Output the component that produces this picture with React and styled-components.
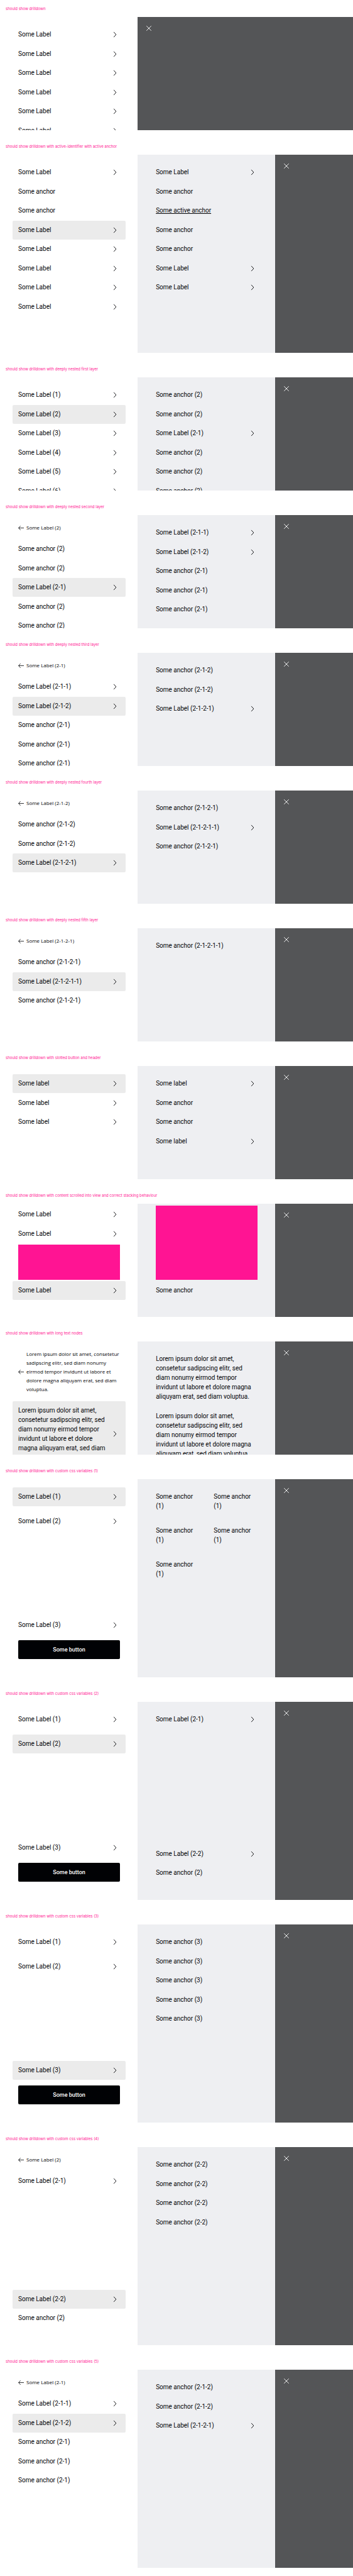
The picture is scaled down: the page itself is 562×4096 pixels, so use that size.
import React from "react";
import styled, { createGlobalStyle, css } from "styled-components";

const GlobalStyle = createGlobalStyle`
  *, *::before, *::after { box-sizing: border-box; }
  body {
    margin: 0;
    background: #fff;
    color: #010205;
    font: 10px/15px Roboto, "Liberation Sans", sans-serif;
  }
`;

const Page = styled.main`
  padding-bottom: 13px;
`;

const Example = styled.section`
  & + & {
    padding-top: 12px;
  }
`;

const Title = styled.h2`
  margin: 0;
  padding: 9px;
  color: #ff1493;
  font: 400 6px/9px Inter, "Open Sans", sans-serif;
`;

const Drilldown = styled.div`
  display: grid;
  grid-template-columns: ${(p) => (p.$open ? "39% 39% 1fr" : "39% 1fr")};
  height: ${(p) => (p.$tall ? 315 : 180)}px;
  overflow: hidden;
`;

const Panel = styled.nav`
  display: flex;
  flex-direction: column;
  min-height: 0;
  overflow: hidden;
  padding: ${(p) => (p.$scrolled ? p.$scrolled : 13)}px 19px ${(p) => (p.$spaced ? 29 : 27)}px 20px;
  background: ${(p) => (p.$secondary ? "#eeeff2" : "#fff")};
`;

const Backdrop = styled.div`
  padding: 11px;
  background: #545557;
`;

const IconButton = styled.button`
  display: block;
  width: 14px;
  height: 14px;
  padding: 0;
  border: 0;
  background: none;
  color: #fff;
`;

const Items = styled.ul`
  flex: 1 0 auto;
  margin: 0;
  padding: 0;
  list-style: none;
  ${(p) =>
    p.$columns
      ? css`
          display: grid;
          grid-template-columns: 1fr 1fr;
          align-content: start;
          gap: 9px 4px;
        `
      : css`
          display: flex;
          flex-direction: column;
        `}
  ${(p) =>
    p.$spaced
      ? css`
          gap: 9px;
        `
      : !p.$columns &&
        css`
          & > li:nth-child(odd) {
            padding-bottom: 1px;
          }
        `}
`;

const Item = styled.li`
  margin-top: ${(p) => (p.$pushed ? "auto" : 0)};
`;

const row = css`
  display: flex;
  align-items: center;
  gap: 4px;
  width: 100%;
  padding: 7px 9px 8px;
  border: 0;
  border-radius: 2px;
  background: none;
  color: inherit;
  font: inherit;
  text-align: left;
  text-decoration: none;
`;

const LabelButton = styled.button`
  ${row}
  background: ${(p) => (p.$active ? "#ebebeb" : "none")};
`;

const RowText = styled.span`
  flex: 1;
`;

const Anchor = styled.a`
  ${row}
  ${(p) =>
    p.$active &&
    css`
      text-decoration: underline;
      text-decoration-thickness: 1px;
      text-underline-offset: 1px;
    `}
`;

const BackButton = styled.button`
  display: flex;
  flex: none;
  align-items: center;
  gap: 4px;
  margin: 0 0 12px;
  padding: 0 9px;
  border: 0;
  background: none;
  color: inherit;
  font: 8px/14px "Open Sans", "Noto Sans", sans-serif;
  text-align: left;
`;

const PrimaryButton = styled.button`
  display: block;
  width: calc(100% - 18px);
  height: 30px;
  margin: 0 9px;
  padding: 0;
  border: 0;
  border-radius: 2px;
  background: #010205;
  color: #fff;
  font: 500 9px/15px Roboto, "Liberation Sans", sans-serif;
`;

const Block = styled.div`
  height: ${(p) => p.$height}px;
  margin: 2px 9px 1px;
  background: #ff1493;
`;

const Icon = styled.svg`
  display: block;
  flex: none;
  width: ${(p) => p.$size}px;
  height: ${(p) => p.$size}px;
  fill: none;
  stroke: currentColor;
`;

const Chevron = () => (
  <Icon $size={14} viewBox="0 0 24 24" strokeWidth="1.5" aria-hidden="true">
    <path d="M7 5l6.5 7L7 19" />
  </Icon>
);

const ArrowLeft = () => (
  <Icon $size={9} viewBox="0 0 16 16" strokeWidth="1.4" aria-hidden="true">
    <path d="M16 8H1M6.5 2L1 8l5.5 6" />
  </Icon>
);

const Close = () => (
  <Icon $size={14} viewBox="0 0 24 24" strokeWidth="1.5" aria-hidden="true">
    <path d="M5.5 5.5l13 13M18.5 5.5l-13 13" />
  </Icon>
);

const label = (text, props) => ({ kind: "label", text, ...props });
const anchor = (text, props) => ({ kind: "anchor", text, ...props });
const button = (text) => ({ kind: "button", text });
const block = (height) => ({ kind: "block", height });
const times = (count, item) => Array.from({ length: count }, () => item);
const active = { active: true };
const pushed = { pushed: true };

const lorem =
  "Lorem ipsum dolor sit amet, consetetur sadipscing elitr, sed diam nonumy eirmod tempor invidunt ut labore et dolore magna aliquyam erat, sed diam voluptua.";

const examples = [
  {
    title: "should show drilldown",
    first: { items: times(6, label("Some Label")) },
  },
  {
    title: "should show drilldown with active-identifier with active anchor",
    tall: true,
    first: {
      items: [
        label("Some Label"),
        ...times(2, anchor("Some anchor")),
        label("Some Label", active),
        ...times(4, label("Some Label")),
      ],
    },
    second: {
      items: [
        label("Some Label"),
        anchor("Some anchor"),
        anchor("Some active anchor", active),
        ...times(2, anchor("Some anchor")),
        ...times(2, label("Some Label")),
      ],
    },
  },
  {
    title: "should show drilldown with deeply nested first layer",
    first: {
      items: [
        label("Some Label (1)"),
        label("Some Label (2)", active),
        label("Some Label (3)"),
        label("Some Label (4)"),
        label("Some Label (5)"),
        label("Some Label (6)"),
      ],
    },
    second: {
      items: [
        ...times(2, anchor("Some anchor (2)")),
        label("Some Label (2-1)"),
        ...times(3, anchor("Some anchor (2)")),
      ],
    },
  },
  {
    title: "should show drilldown with deeply nested second layer",
    first: {
      back: "Some Label (2)",
      items: [
        ...times(2, anchor("Some anchor (2)")),
        label("Some Label (2-1)", active),
        ...times(2, anchor("Some anchor (2)")),
      ],
    },
    second: {
      items: [
        label("Some Label (2-1-1)"),
        label("Some Label (2-1-2)"),
        ...times(3, anchor("Some anchor (2-1)")),
      ],
    },
  },
  {
    title: "should show drilldown with deeply nested third layer",
    first: {
      back: "Some Label (2-1)",
      items: [
        label("Some Label (2-1-1)"),
        label("Some Label (2-1-2)", active),
        ...times(3, anchor("Some anchor (2-1)")),
      ],
    },
    second: {
      items: [...times(2, anchor("Some anchor (2-1-2)")), label("Some Label (2-1-2-1)")],
    },
  },
  {
    title: "should show drilldown with deeply nested fourth layer",
    first: {
      back: "Some Label (2-1-2)",
      items: [
        ...times(2, anchor("Some anchor (2-1-2)")),
        label("Some Label (2-1-2-1)", active),
      ],
    },
    second: {
      items: [
        anchor("Some anchor (2-1-2-1)"),
        label("Some Label (2-1-2-1-1)"),
        anchor("Some anchor (2-1-2-1)"),
      ],
    },
  },
  {
    title: "should show drilldown with deeply nested fifth layer",
    first: {
      back: "Some Label (2-1-2-1)",
      items: [
        anchor("Some anchor (2-1-2-1)"),
        label("Some Label (2-1-2-1-1)", active),
        anchor("Some anchor (2-1-2-1)"),
      ],
    },
    second: { items: [anchor("Some anchor (2-1-2-1-1)")] },
  },
  {
    title: "should show drilldown with slotted button and header",
    first: { items: [label("Some label", active), ...times(2, label("Some label"))] },
    second: {
      items: [label("Some label"), ...times(2, anchor("Some anchor")), label("Some label")],
    },
  },
  {
    title: "should show drilldown with content scrolled into view and correct stacking behaviour",
    first: {
      scrolled: 2,
      items: [...times(2, label("Some Label")), block(56), label("Some Label", active)],
    },
    second: { scrolled: 1, items: [block(118), anchor("Some anchor")] },
  },
  {
    title: "should show drilldown with long text nodes",
    first: { back: lorem, items: [label(lorem, active)] },
    second: { items: times(2, anchor(lorem)) },
  },
  {
    title: "should show drilldown with custom css variables (1)",
    tall: true,
    first: {
      spaced: true,
      items: [
        label("Some Label (1)", active),
        label("Some Label (2)"),
        label("Some Label (3)", pushed),
        button("Some button"),
      ],
    },
    second: { columns: true, items: times(5, anchor("Some anchor (1)")) },
  },
  {
    title: "should show drilldown with custom css variables (2)",
    tall: true,
    first: {
      spaced: true,
      items: [
        label("Some Label (1)"),
        label("Some Label (2)", active),
        label("Some Label (3)", pushed),
        button("Some button"),
      ],
    },
    second: {
      items: [
        label("Some Label (2-1)"),
        label("Some Label (2-2)", pushed),
        anchor("Some anchor (2)"),
      ],
    },
  },
  {
    title: "should show drilldown with custom css variables (3)",
    tall: true,
    first: {
      spaced: true,
      items: [
        label("Some Label (1)"),
        label("Some Label (2)"),
        label("Some Label (3)", { ...active, ...pushed }),
        button("Some button"),
      ],
    },
    second: { items: times(5, anchor("Some anchor (3)")) },
  },
  {
    title: "should show drilldown with custom css variables (4)",
    tall: true,
    first: {
      back: "Some Label (2)",
      items: [
        label("Some Label (2-1)"),
        label("Some Label (2-2)", { ...active, ...pushed }),
        anchor("Some anchor (2)"),
      ],
    },
    second: { items: times(4, anchor("Some anchor (2-2)")) },
  },
  {
    title: "should show drilldown with custom css variables (5)",
    tall: true,
    first: {
      back: "Some Label (2-1)",
      items: [
        label("Some Label (2-1-1)"),
        label("Some Label (2-1-2)", active),
        ...times(3, anchor("Some anchor (2-1)")),
      ],
    },
    second: {
      items: [...times(2, anchor("Some anchor (2-1-2)")), label("Some Label (2-1-2-1)")],
    },
  },
];

function Entry({ item }) {
  switch (item.kind) {
    case "label":
      return (
        <LabelButton type="button" $active={item.active}>
          <RowText>{item.text}</RowText>
          <Chevron />
        </LabelButton>
      );
    case "anchor":
      return (
        <Anchor href="#" $active={item.active} aria-current={item.active ? "page" : undefined}>
          {item.text}
        </Anchor>
      );
    case "button":
      return <PrimaryButton type="button">{item.text}</PrimaryButton>;
    default:
      return <Block $height={item.height} />;
  }
}

function Layer({ layer, secondary }) {
  return (
    <Panel $secondary={secondary} $spaced={layer.spaced} $scrolled={layer.scrolled}>
      {layer.back && (
        <BackButton type="button">
          <ArrowLeft />
          <span>{layer.back}</span>
        </BackButton>
      )}
      <Items $spaced={layer.spaced} $columns={layer.columns}>
        {layer.items.map((item, i) => (
          <Item key={i} $pushed={item.pushed}>
            <Entry item={item} />
          </Item>
        ))}
      </Items>
    </Panel>
  );
}

export default function App() {
  return (
    <>
      <GlobalStyle />
      <Page>
        {examples.map((example) => (
          <Example key={example.title}>
            <Title>{example.title}</Title>
            <Drilldown $tall={example.tall} $open={Boolean(example.second)}>
              <Layer layer={example.first} />
              {example.second && <Layer layer={example.second} secondary />}
              <Backdrop>
                <IconButton type="button" aria-label="Close">
                  <Close />
                </IconButton>
              </Backdrop>
            </Drilldown>
          </Example>
        ))}
      </Page>
    </>
  );
}
